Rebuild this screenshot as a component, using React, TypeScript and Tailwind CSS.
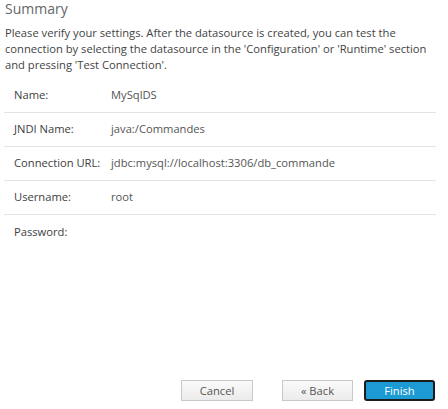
import React from 'react'

const rows = [
    { label: 'Name:', value: 'MySqlDS' },
    { label: 'JNDI Name:', value: 'java:/Commandes' },
    { label: 'Connection URL:', value: 'jdbc:mysql://localhost:3306/db_commande' },
    { label: 'Username:', value: 'root' },
    { label: 'Password:', value: '' },
]

const App = () => {
    return (
        <div className="w-[448px] h-[409px] bg-white flex flex-col text-[11.2px] text-[#333]" style={{ fontFamily: '"Open Sans", sans-serif' }}>
            <div className="pl-[5px] w-[432px]">
                <h2 className="text-[14px] leading-[18px] text-[#666]">Summary</h2>
                <p className="mt-[7px] leading-[16px] text-[#444]">
                    Please verify your settings. After the datasource is created, you can test the connection by selecting the datasource in the 'Configuration' or 'Runtime' section and pressing 'Test Connection'.
                </p>
            </div>
            <div className="mt-[6px] ml-[4px] w-[432px] flex flex-col">
                {rows.map((r, i) => (
                    <div
                        key={r.label}
                        className={`flex items-center h-[34px] ${i < rows.length - 1 ? 'border-b border-[#e3e3e3]' : ''}`}
                    >
                        <span className="w-[107px] pl-[10px] text-[#3d3d3d] whitespace-nowrap">{r.label}</span>
                        <span className="text-[#555]">{r.value}</span>
                    </div>
                ))}
            </div>
            <div className="flex-1" />
            <div className="flex items-center pb-[8px]">
                <button className="ml-[181px] w-[72px] h-[21px] border border-[#c8c8c8] bg-gradient-to-b from-[#fafafa] to-[#ebebeb] text-[#555] leading-none">
                    Cancel
                </button>
                <button className="ml-[29px] w-[71px] h-[21px] border border-[#c8c8c8] bg-gradient-to-b from-[#fafafa] to-[#ebebeb] text-[#555] leading-none">
                    « Back
                </button>
                <button className="ml-[11px] w-[71px] h-[21px] rounded-[3px] border-2 border-[#1c1c1c] bg-[#1b9ad3] text-white leading-none">
                    Finish
                </button>
            </div>
        </div>
    )
}

export default App
